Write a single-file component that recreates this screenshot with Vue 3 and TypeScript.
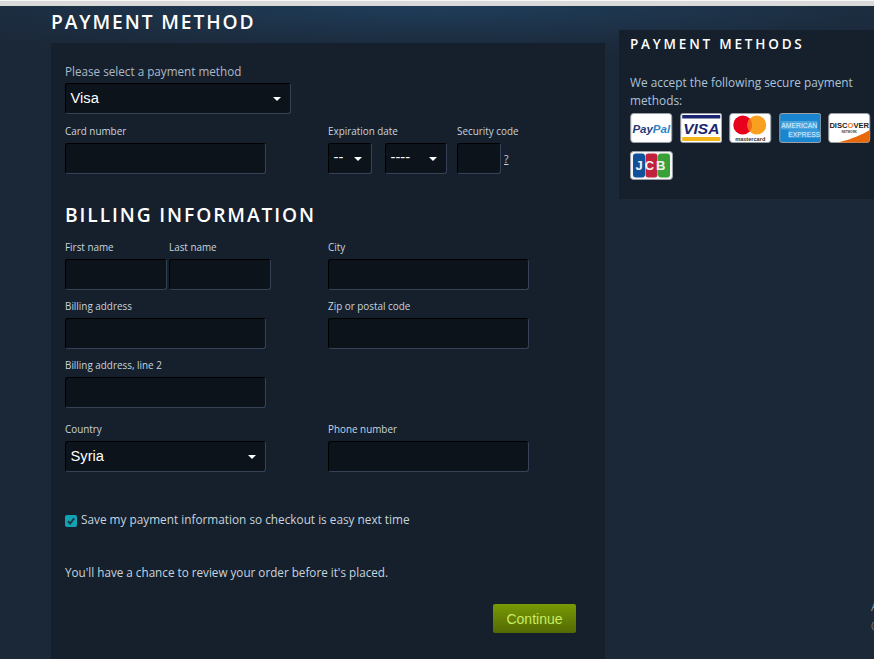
<script setup lang="ts">
const months: string = '--'
const years: string = '----'
</script>

<template>
  <div class="page">
    <div class="strip"></div>
    <div class="columns">
      <main class="main">
        <h1 class="title">PAYMENT METHOD</h1>
        <section class="panel">
          <div class="field">
            <label class="label big">Please select a payment method</label>
            <div class="select w226"><span>Visa</span></div>
          </div>
          <div class="row r2">
            <div class="col-left field">
              <label class="label">Card number</label>
              <input class="input w201" />
            </div>
            <div class="expiry">
              <div class="field">
                <label class="label">Expiration date</label>
                <div class="inline">
                  <div class="select dash w44"><span>{{ months }}</span></div>
                  <div class="select dash w62"><span>{{ years }}</span></div>
                </div>
              </div>
              <div class="field sec">
                <label class="label">Security code</label>
                <div class="inline tight">
                  <input class="input w44" />
                  <span class="help">?</span>
                </div>
              </div>
            </div>
          </div>

          <h2 class="subtitle">BILLING INFORMATION</h2>

          <div class="row">
            <div class="col-left names">
              <div class="field">
                <label class="label">First name</label>
                <input class="input w102" />
              </div>
              <div class="field">
                <label class="label">Last name</label>
                <input class="input w102" />
              </div>
            </div>
            <div class="field">
              <label class="label">City</label>
              <input class="input w201" />
            </div>
          </div>
          <div class="row r8">
            <div class="col-left field">
              <label class="label">Billing address</label>
              <input class="input w201" />
            </div>
            <div class="field">
              <label class="label">Zip or postal code</label>
              <input class="input w201" />
            </div>
          </div>
          <div class="row r8">
            <div class="col-left field">
              <label class="label">Billing address, line 2</label>
              <input class="input w201" />
            </div>
          </div>
          <div class="row r13">
            <div class="col-left field">
              <label class="label">Country</label>
              <div class="select w201"><span>Syria</span></div>
            </div>
            <div class="field">
              <label class="label">Phone number</label>
              <input class="input w201" />
            </div>
          </div>

          <div class="save">
            <span class="check">
              <svg viewBox="0 0 12 12" width="12" height="12">
                <path d="M3 6.2 5.1 8.4 9.2 3.4" fill="none" stroke="#1f3a46" stroke-width="2" />
              </svg>
            </span>
            <span>Save my payment information so checkout is easy next time</span>
          </div>
          <p class="note">You'll have a chance to review your order before it's placed.</p>
          <div class="actions">
            <button class="continue" type="button">Continue</button>
          </div>
        </section>
      </main>

      <aside class="side">
        <h3 class="side-title">PAYMENT METHODS</h3>
        <p class="side-text">We accept the following secure payment methods:</p>
        <div class="cards">
          <svg class="card" viewBox="0 0 42 30">
            <rect x=".5" y=".5" width="41" height="29" rx="3" fill="#fff" stroke="#9aa0a6" />
            <text x="21" y="19.5" text-anchor="middle" font-family="Liberation Sans, sans-serif" font-size="11.5" font-weight="700" font-style="italic">
              <tspan fill="#1f3a78">Pay</tspan><tspan fill="#2b84c6">Pal</tspan>
            </text>
          </svg>
          <svg class="card" viewBox="0 0 42 30">
            <rect x=".5" y=".5" width="41" height="29" rx="2" fill="#fff" stroke="#9aa0a6" />
            <rect x="2" y="2" width="38" height="3.5" fill="#1a2570" />
            <rect x="2" y="24" width="38" height="4" fill="#f5b619" />
            <text x="21" y="20.5" text-anchor="middle" font-family="Liberation Sans, sans-serif" font-size="15.5" font-weight="700" font-style="italic" fill="#1a2570">VISA</text>
          </svg>
          <svg class="card" viewBox="0 0 42 30">
            <rect x=".5" y=".5" width="41" height="29" rx="3" fill="#fff" stroke="#9aa0a6" />
            <circle cx="13.5" cy="12" r="9.5" fill="#e8001c" />
            <circle cx="27.5" cy="12" r="9.5" fill="#f9a01e" />
            <path d="M20.5 5.6a9.5 9.5 0 0 1 0 12.8a9.5 9.5 0 0 1 0-12.8z" fill="#f26a1a" />
            <text x="21" y="27.5" text-anchor="middle" font-family="Liberation Sans, sans-serif" font-size="5.6" font-weight="700" fill="#333">mastercard</text>
          </svg>
          <svg class="card" viewBox="0 0 42 30">
            <rect x=".5" y=".5" width="41" height="29" rx="2" fill="#1a86cf" stroke="#9aa0a6" />
            <rect x="2" y="8" width="36" height="8.5" fill="#4aa5df" />
            <rect x="9" y="16.5" width="31" height="8.5" fill="#3a9bdc" />
            <text x="20" y="15" text-anchor="middle" font-family="Liberation Sans, sans-serif" font-size="6.8" fill="#e4f3fc">AMERICAN</text>
            <text x="25" y="23.5" text-anchor="middle" font-family="Liberation Sans, sans-serif" font-size="6.8" fill="#e4f3fc">EXPRESS</text>
          </svg>
          <svg class="card" viewBox="0 0 42 30">
            <rect x=".5" y=".5" width="41" height="29" rx="3" fill="#fff" stroke="#9aa0a6" />
            <path d="M10 29.5C24 26 35 21 41.5 17V26.5a3 3 0 0 1-3 3z" fill="#e8690c" />
            <text x="21" y="15" text-anchor="middle" font-family="Liberation Sans, sans-serif" font-size="7.6" font-weight="700" fill="#222">DISC<tspan fill="#ee7a12">O</tspan>VER</text>
            <text x="21" y="19.5" text-anchor="middle" font-family="Liberation Sans, sans-serif" font-size="3" font-weight="700" fill="#444">NETWORK</text>
          </svg>
          <svg class="card jcb" viewBox="0 0 43 29">
            <rect x=".5" y=".5" width="42" height="28" rx="3" fill="#f4f4f4" stroke="#9aa0a6" />
            <rect x="3" y="2.5" width="12" height="24" rx="3" fill="#11509a" />
            <rect x="15.5" y="2.5" width="12" height="24" rx="3" fill="#c0213d" />
            <rect x="28" y="2.5" width="12" height="24" rx="3" fill="#3aa03a" />
            <text x="21.5" y="19" text-anchor="middle" font-family="Liberation Sans, sans-serif" font-size="13" font-weight="700" fill="#f2f2f2" letter-spacing="2">JCB</text>
          </svg>
        </div>
      </aside>
    </div>
    <div class="edge">A<br />©</div>
  </div>
</template>

<style>
html, body { margin: 0; background: #1b2838; }
</style>

<style scoped>
.page {
  position: relative;
  width: 874px;
  height: 659px;
  overflow: hidden;
  background: radial-gradient(ellipse 620px 50px at 50% 6px, #1f3d5a 0%, #1c2d40 70%, #1b2838 100%), #1b2838;
  background-color: #1b2838;
  font-family: "Open Sans", "Noto Sans", sans-serif;
}
.strip {
  height: 6px;
  background: linear-gradient(#f6f6f6 0 1px, #d9d9d9 1px);
  box-sizing: border-box;
}
.columns {
  display: flex;
  align-items: flex-start;
  gap: 14px;
  padding-left: 51px;
}
.main { width: 554px; flex: none; }
.title {
  margin: 4px 0 9px;
  height: 24px;
  line-height: 24px;
  font-size: 19.2px;
  font-weight: 600;
  letter-spacing: 1.9px;
  color: #fff;
}
.panel {
  background: #16202d;
  height: 640px;
  padding: 20px 14px 0;
  box-sizing: border-box;
}
.field { display: flex; flex-direction: column; }
.label {
  height: 16px;
  line-height: 17px;
  margin-bottom: 4px;
  font-size: 9.9px;
  color: #c6d4df;
  white-space: nowrap;
}
.label.big { font-size: 11.7px; line-height: 16px; color: #acb9c6; }
.row { display: flex; }
.r2 { margin-top: 9px; }
.r8 { margin-top: 8px; }
.r13 { margin-top: 13px; }
.col-left { width: 263px; flex: none; }
.names { display: flex; gap: 2px; }
.input, .select {
  height: 31px;
  box-sizing: border-box;
  background: #0c131b;
  border: 1px solid #000;
  border-right-color: #354257;
  border-bottom-color: #354257;
  border-radius: 3px;
  outline: none;
  padding: 0;
}
.select {
  position: relative;
  display: flex;
  align-items: center;
  padding: 0 0 2px 4.5px;
  font-family: "Liberation Sans", Arial, sans-serif;
  font-size: 14.7px;
  color: #fff;
}
.select::after {
  content: "";
  position: absolute;
  right: 9px;
  top: 13px;
  border-left: 4px solid transparent;
  border-right: 4px solid transparent;
  border-top: 4.5px solid #fff;
}
.select.dash { padding-bottom: 3px; }
.w226 { width: 226px; }
.w201 { width: 201px; }
.w102 { width: 102px; }
.w62 { width: 62px; }
.w44 { width: 44px; }
.expiry { display: flex; }
.inline { display: flex; gap: 13px; align-items: center; }
.inline.tight { gap: 3px; }
.sec { margin-left: 10px; }
.help { font-size: 10.5px; color: #c6d4df; text-decoration: underline; margin-top: 1px; }
.subtitle {
  margin: 28px 0 11px;
  height: 26px;
  line-height: 26px;
  font-size: 19.2px;
  font-weight: 600;
  letter-spacing: 1.9px;
  color: #fff;
}
.save {
  margin-top: 40px;
  display: flex;
  align-items: center;
  gap: 4px;
  height: 16px;
  font-size: 11.8px;
  color: #c6d4df;
}
.save > span:last-child { margin-top: -2px; }
.check {
  display: block;
  width: 12px;
  height: 12px;
  border-radius: 2px;
  background: #13a2b4;
  margin-top: 2px;
}
.check svg { display: block; }
.note {
  margin: 36px 0 0;
  height: 16px;
  line-height: 16px;
  font-size: 11.7px;
  color: #c6d4df;
}
.actions { display: flex; justify-content: flex-end; padding-right: 15px; margin-top: 24px; }
.continue {
  width: 83px;
  height: 29px;
  padding: 0;
  border: 0;
  border-radius: 2px;
  background: linear-gradient(#799905, #536904);
  color: #c8ee60;
  font-family: "Liberation Sans", Arial, sans-serif;
  font-size: 14px;
}
.side {
  width: 255px;
  flex: none;
  height: 169px;
  margin-top: 24px;
  padding: 0 0 0 11px;
  box-sizing: border-box;
  background: #16202d;
}
.side-title {
  margin: 5px 0 0;
  height: 18px;
  line-height: 18px;
  font-size: 13.5px;
  font-weight: 600;
  letter-spacing: 2.8px;
  color: #fff;
}
.side-text {
  margin: 20px 0 4px;
  width: 244px;
  font-size: 11.85px;
  line-height: 18px;
  color: #acc3d8;
}
.cards { display: flex; flex-wrap: wrap; gap: 8px 7px; width: 244px; }
.card { display: block; width: 42.5px; height: 30px; }
.jcb { width: 43px; height: 29px; }
.edge {
  position: absolute;
  left: 871px;
  top: 597px;
  font-family: "Open Sans", sans-serif;
  font-size: 12px;
  line-height: 20px;
  color: #8f98a0;
}
</style>
